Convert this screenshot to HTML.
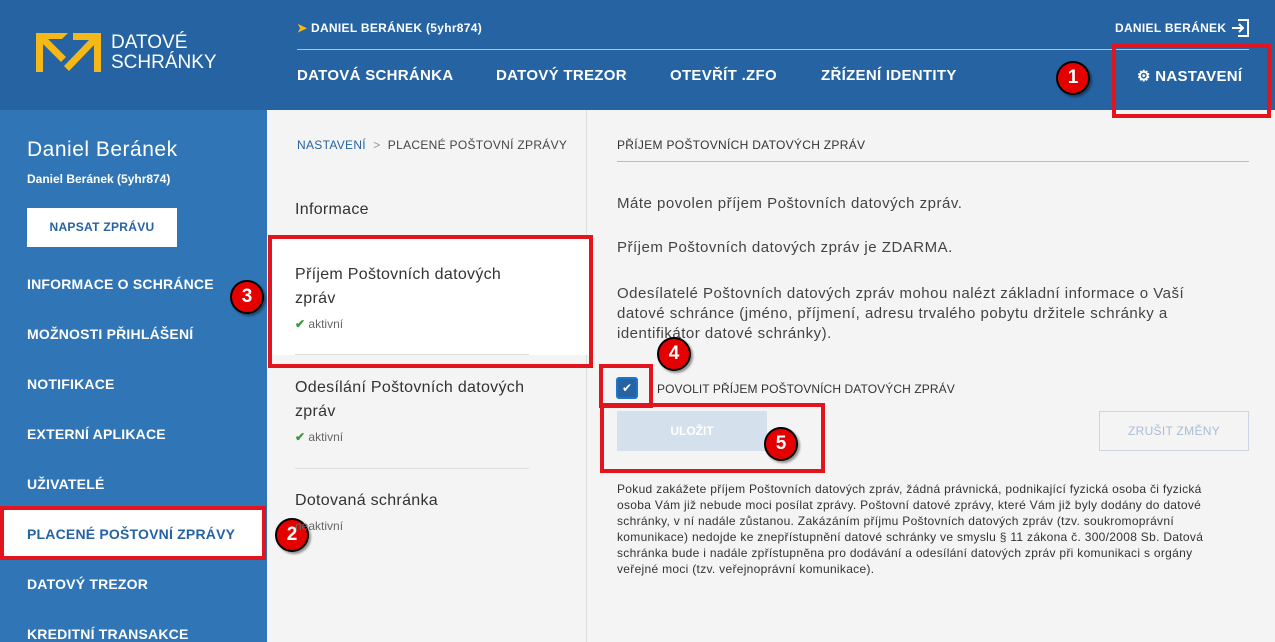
<!DOCTYPE html>
<html><head><meta charset="utf-8"><style>
*{box-sizing:border-box;margin:0;padding:0}
body{width:1275px;height:642px;overflow:hidden;background:#f4f4f4;font-family:"Liberation Sans",Arial,sans-serif;position:relative;color:#333}
.abs{position:absolute}
.hdr{left:0;top:0;width:1275px;height:110px;background:#2563a3}
.nav{color:#fff;font-weight:bold;font-size:15px;letter-spacing:.3px;top:67px}
.side{left:0;top:110px;width:267px;height:532px;background:#3075b5}
.si{left:27px;color:#fff;font-weight:bold;font-size:14px;letter-spacing:.2px}
.red{border:4px solid #e2141d;position:absolute}
.num{position:absolute;width:34px;height:34px;border-radius:50%;background:#e50000;border:2px solid #000;color:#fff;font-weight:bold;font-size:19px;text-align:center;line-height:30px;box-shadow:2px 2px 2px rgba(0,0,0,.4)}
.p{font-size:15px;color:#444;letter-spacing:.5px;line-height:20px}
.mi{left:295px;font-size:16px;color:#333;letter-spacing:.3px;line-height:24px}
.ok{font-size:12px;color:#666}
.ok b{color:#3a9a3a}
</style></head><body>
<div class="abs hdr"></div>
<svg class="abs" style="left:36px;top:33px" width="66" height="40" viewBox="0 0 66 40"><path d="M0 0H32L26 6H12L30 24L25 29L7 11V39H0Z" fill="#f6b816"/><path d="M37 0H65V39H58V12L33 38L28 33L53 7H37Z" fill="#f6b816"/></svg>
<div class="abs" style="left:111px;top:33px;color:#fff;font-size:19px;line-height:20px">DATOVÉ<br>SCHRÁNKY</div>
<div class="abs" style="left:297px;top:21px;color:#fff;font-weight:bold;font-size:12px;letter-spacing:.3px"><span style="color:#f6b816">➤</span> DANIEL BERÁNEK (5yhr874)</div>
<div class="abs" style="left:1115px;top:21px;color:#fff;font-weight:bold;font-size:12px;letter-spacing:.3px">DANIEL BERÁNEK</div>
<svg class="abs" style="left:1230px;top:18px" width="20" height="20" viewBox="0 0 20 20" fill="none" stroke="#fff" stroke-width="2"><path d="M8 2H18V18H8M2 10H13M9 6L13 10L9 14"/></svg>
<div class="abs" style="left:297px;top:49px;width:952px;height:1px;background:#aac4e2"></div>
<div class="abs nav" style="left:297px">DATOVÁ SCHRÁNKA</div>
<div class="abs nav" style="left:496px">DATOVÝ TREZOR</div>
<div class="abs nav" style="left:670px">OTEVŘÍT .ZFO</div>
<div class="abs nav" style="left:821px">ZŘÍZENÍ IDENTITY</div>
<div class="abs nav" style="left:1137px">⚙ NASTAVENÍ</div>
<div class="red" style="left:1112px;top:44px;width:159px;height:74px"></div>
<div class="num" style="left:1056px;top:61px">1</div>

<div class="abs side"></div>
<div class="abs" style="left:27px;top:138px;color:#fff;font-size:21px;letter-spacing:.5px">Daniel Beránek</div>
<div class="abs" style="left:27px;top:172px;color:#fff;font-size:12px;font-weight:bold">Daniel Beránek (5yhr874)</div>
<div class="abs" style="left:27px;top:208px;width:150px;height:39px;background:#fff;color:#2563a3;font-size:12px;font-weight:bold;text-align:center;line-height:39px;letter-spacing:.3px">NAPSAT ZPRÁVU</div>
<div class="abs si" style="top:276px">INFORMACE O SCHRÁNCE</div>
<div class="abs si" style="top:326px">MOŽNOSTI PŘIHLÁŠENÍ</div>
<div class="abs si" style="top:376px">NOTIFIKACE</div>
<div class="abs si" style="top:426px">EXTERNÍ APLIKACE</div>
<div class="abs si" style="top:476px">UŽIVATELÉ</div>
<div class="abs" style="left:0;top:508px;width:264px;height:50px;background:#fff"></div>
<div class="abs si" style="top:526px;color:#2563a3">PLACENÉ POŠTOVNÍ ZPRÁVY</div>
<div class="red" style="left:0;top:506px;width:266px;height:54px"></div>
<div class="num" style="left:275px;top:518px">2</div>
<div class="abs si" style="top:576px">DATOVÝ TREZOR</div>
<div class="abs si" style="top:626px">KREDITNÍ TRANSAKCE</div>

<div class="abs" style="left:586px;top:110px;width:1px;height:532px;background:#ddd"></div>
<div class="abs" style="left:297px;top:138px;font-size:12px;color:#444;letter-spacing:.3px"><span style="color:#2563a3">NASTAVENÍ</span> &nbsp;<span style="color:#999">&gt;</span>&nbsp; PLACENÉ POŠTOVNÍ ZPRÁVY</div>
<div class="abs mi" style="top:198px">Informace</div>
<div class="abs" style="left:272px;top:238px;width:318px;height:117px;background:#fff"></div>
<div class="abs mi" style="top:263px">Příjem Poštovních datových<br>zpráv</div>
<div class="abs ok" style="left:295px;top:317px"><b>✔</b> aktivní</div>
<div class="red" style="left:268px;top:235px;width:325px;height:133px"></div>
<div class="num" style="left:230px;top:280px">3</div>
<div class="abs" style="left:295px;top:354px;width:234px;height:1px;background:#ddd"></div>
<div class="abs mi" style="top:376px">Odesílání Poštovních datových<br>zpráv</div>
<div class="abs ok" style="left:295px;top:430px"><b>✔</b> aktivní</div>
<div class="abs" style="left:295px;top:468px;width:234px;height:1px;background:#ddd"></div>
<div class="abs mi" style="top:489px">Dotovaná schránka</div>
<div class="abs ok" style="left:295px;top:519px">neaktivní</div>

<div class="abs" style="left:617px;top:138px;font-size:12px;color:#333;letter-spacing:.3px">PŘÍJEM POŠTOVNÍCH DATOVÝCH ZPRÁV</div>
<div class="abs" style="left:617px;top:161px;width:632px;height:1px;background:#bbb"></div>
<div class="abs p" style="left:617px;top:194px">Máte povolen příjem Poštovních datových zpráv.</div>
<div class="abs p" style="left:617px;top:238px">Příjem Poštovních datových zpráv je ZDARMA.</div>
<div class="abs p" style="left:617px;top:284px;width:610px">Odesílatelé Poštovních datových zpráv mohou nalézt základní informace o Vaší datové schránce (jméno, příjmení, adresu trvalého pobytu držitele schránky a identifikátor datové schránky).</div>
<div class="abs" style="left:616px;top:377px;width:22px;height:22px;background:#2563a3;border:2px solid #1d74d0;border-radius:3px;color:#fff;font-size:12px;text-align:center;line-height:18px">✔</div>
<div class="abs" style="left:657px;top:382px;font-size:12px;color:#333;letter-spacing:.1px">POVOLIT PŘÍJEM POŠTOVNÍCH DATOVÝCH ZPRÁV</div>
<div class="red" style="left:599px;top:364px;width:54px;height:44px"></div>
<div class="num" style="left:657px;top:337px">4</div>
<div class="abs" style="left:617px;top:411px;width:150px;height:40px;background:#d5e0ed;color:#fff;font-weight:bold;font-size:12px;text-align:center;line-height:40px">ULOŽIT</div>
<div class="red" style="left:600px;top:403px;width:225px;height:70px"></div>
<div class="num" style="left:764px;top:427px">5</div>
<div class="abs" style="left:1099px;top:411px;width:150px;height:40px;border:1px solid #cbd6e4;color:#a8bdd6;font-size:12px;text-align:center;line-height:38px;letter-spacing:.3px">ZRUŠIT ZMĚNY</div>
<div class="abs" style="left:617px;top:481px;width:590px;font-size:12px;color:#333;line-height:16px;letter-spacing:.3px">Pokud zakážete příjem Poštovních datových zpráv, žádná právnická, podnikající fyzická osoba či fyzická osoba Vám již nebude moci posílat zprávy. Poštovní datové zprávy, které Vám již byly dodány do datové schránky, v ní nadále zůstanou. Zakázáním příjmu Poštovních datových zpráv (tzv. soukromoprávní komunikace) nedojde ke znepřístupnění datové schránky ve smyslu § 11 zákona č. 300/2008 Sb. Datová schránka bude i nadále zpřístupněna pro dodávání a odesílání datových zpráv při komunikaci s orgány veřejné moci (tzv. veřejnoprávní komunikace).</div>
</body></html>
